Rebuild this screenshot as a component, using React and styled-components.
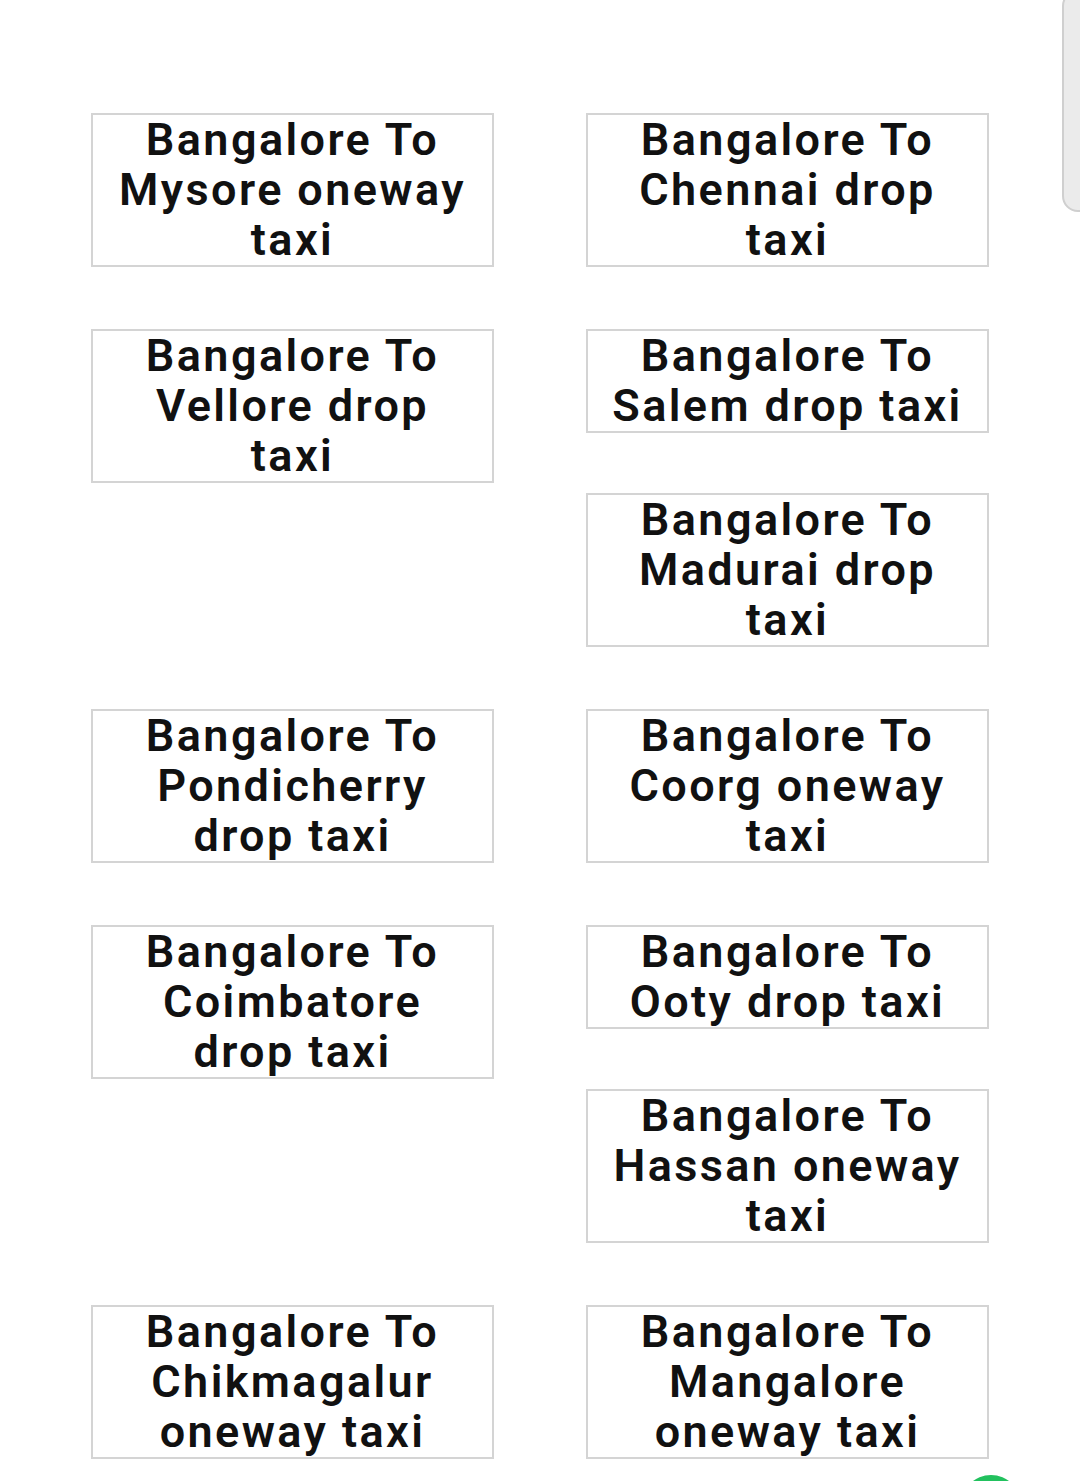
import styled, { createGlobalStyle } from "styled-components";

const GlobalStyle = createGlobalStyle`
  html, body {
    margin: 0;
    padding: 0;
    background: #ffffff;
  }
  body {
    font-family: Roboto, "Liberation Sans", sans-serif;
    overflow: hidden;
  }
`;

const Page = styled.div`
  position: relative;
  width: 1080px;
  height: 1481px;
  overflow: hidden;
  background: #fff;
`;

const Routes = styled.div`
  width: 898px;
  margin: 0 auto;
  padding-top: 113px;
  display: flex;
  flex-direction: column;
  gap: 62px;
`;

const Group = styled.div`
  display: grid;
  grid-template-columns: 403px 403px;
  column-gap: 92px;
  align-items: start;
`;

const Column = styled.div`
  display: flex;
  flex-direction: column;
  gap: 60px;
`;

const RouteLink = styled.a`
  display: block;
  box-sizing: border-box;
  border: 2px solid #d4d4d4;
  padding: 0 8px;
  text-align: center;
  text-decoration: none;
  white-space: pre-line;
  color: #111;
  font-size: 45px;
  font-weight: 600;
  letter-spacing: 2.4px;
  line-height: 50px;
`;

// scroll thumb peeking in at the right edge
const ScrollThumb = styled.div`
  position: absolute;
  top: -10px;
  right: -20px;
  width: 34px;
  height: 218px;
  background: #ebebeb;
  border: 2px solid #cfcfcf;
  border-radius: 16px;
`;

// floating chat button, cut off at the bottom
const FloatButton = styled.div`
  position: absolute;
  left: 961px;
  top: 1475px;
  width: 60px;
  height: 60px;
  border-radius: 50%;
  background: #22c15e;
`;

const groups = [
  {
    left: ["Bangalore To\nMysore oneway\ntaxi"],
    right: ["Bangalore To\nChennai drop\ntaxi"],
  },
  {
    left: ["Bangalore To\nVellore drop\ntaxi"],
    right: ["Bangalore To\nSalem drop taxi", "Bangalore To\nMadurai drop\ntaxi"],
  },
  {
    left: ["Bangalore To\nPondicherry\ndrop taxi"],
    right: ["Bangalore To\nCoorg oneway\ntaxi"],
  },
  {
    left: ["Bangalore To\nCoimbatore\ndrop taxi"],
    right: ["Bangalore To\nOoty drop taxi", "Bangalore To\nHassan oneway\ntaxi"],
  },
  {
    left: ["Bangalore To\nChikmagalur\noneway taxi"],
    right: ["Bangalore To\nMangalore\noneway taxi"],
  },
];

function App() {
  return (
    <Page>
      <GlobalStyle />
      <Routes>
        {groups.map((group, i) => (
          <Group key={i}>
            <Column>
              {group.left.map((text) => (
                <RouteLink key={text} href="#">
                  {text}
                </RouteLink>
              ))}
            </Column>
            <Column>
              {group.right.map((text) => (
                <RouteLink key={text} href="#">
                  {text}
                </RouteLink>
              ))}
            </Column>
          </Group>
        ))}
      </Routes>
      <ScrollThumb />
      <FloatButton />
    </Page>
  );
}

export default App;
